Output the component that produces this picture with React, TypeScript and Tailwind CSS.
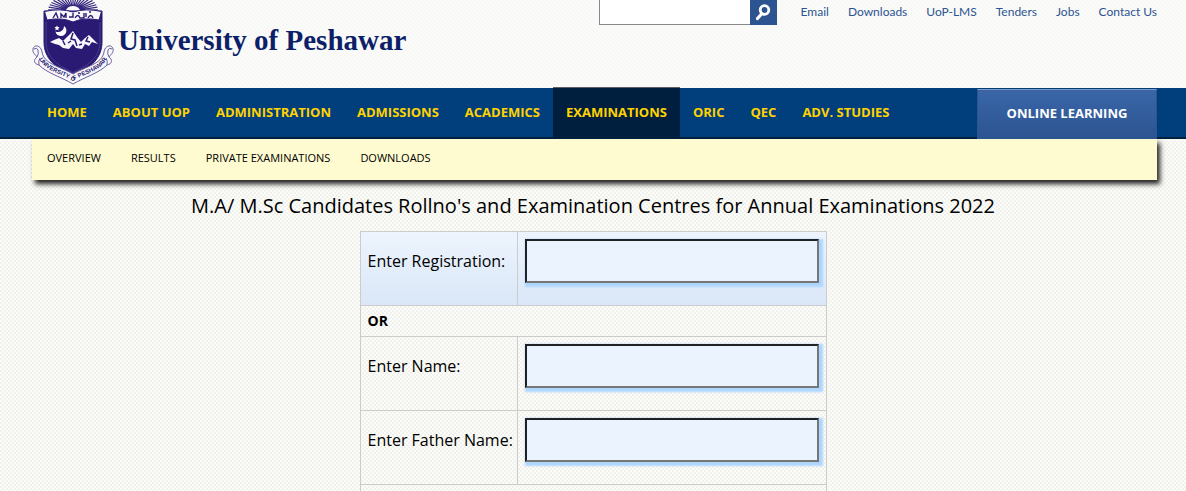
import React from 'react';

const checker =
  'bg-[conic-gradient(#f1f1ed_25%,#fcfcf8_0_50%,#f1f1ed_0_75%,#fcfcf8_0)] bg-[length:4px_4px]';
const headerChecker =
  'bg-[conic-gradient(#f8f8f6_25%,#fbfbf9_0_50%,#f8f8f6_0_75%,#fbfbf9_0)] bg-[length:4px_4px]';

const topLinks = ['Email', 'Downloads', 'UoP-LMS', 'Tenders', 'Jobs', 'Contact Us'];
const mainLinks = [
  'HOME',
  'ABOUT UOP',
  'ADMINISTRATION',
  'ADMISSIONS',
  'ACADEMICS',
  'EXAMINATIONS',
  'ORIC',
  'QEC',
  'ADV. STUDIES',
];
const subLinks = ['OVERVIEW', 'RESULTS', 'PRIVATE EXAMINATIONS', 'DOWNLOADS'];

function Crest() {
  const rays = Array.from({ length: 21 }, (_, i) => {
    const a = Math.PI + (Math.PI * (i + 0.5)) / 21;
    return `M${41 + 7 * Math.cos(a)} ${11 + 5 * Math.sin(a)}L${41 + 25 * Math.cos(a)} ${11 + 17 * Math.sin(a)}`;
  }).join('');
  return (
    <svg viewBox="0 0 82 86" className="h-[86px] w-[82px] shrink-0" role="img" aria-label="University crest">
      <path d={rays} stroke="#35287f" strokeWidth="1.2" />
      <path d="M12 11H70V42C70 58 59 68 41 76C23 68 12 58 12 42Z" fill="#2b1a74" stroke="#2b1a74" />
      <path d="M14 22V42C14 56 24 65 41 72.500C58 65 68 56 68 42V22" fill="none" stroke="#5d5299" strokeWidth=".6" />
      <path
        d="M12.500 11.500Q28 8 41 12Q54 8 69.500 11.500L67 20Q52 17 41 22Q30 17 15 20Z"
        fill="#f7f6fb"
        stroke="#2b1a74"
      />
      <path
        d="M21 18l3-5 2 5M29 18v-4l3 3 2-4v5M37 17h4v-4M43 18q3-5 5 0h4v-5M54 17v-4M56 18q3-5 5 0M46 13h2M57 12h2"
        fill="none"
        stroke="#2b1a74"
        strokeWidth="1.4"
      />
      <path d="M32 26A5.500 5.500 0 1 1 23.500 31.500A6 6 0 0 0 32 26Z" fill="#fff" />
      <path d="M25 25.500l.8 1.600 1.800.2-1.300 1.300.3 1.800-1.600-.9-1.600.9.3-1.800-1.300-1.300 1.800-.2Z" fill="#fff" />
      <path
        d="M18 42L22 40L27 38L31 41L35 37L41 31L45 37L49 42L53 38L57 35L61 39L66 44L60 42L57 46L53 44L50 49L44 48L41 44L37 49L31 48L27 45L23 44Z"
        fill="#f7f6fb"
      />
      <path d="M41 33l-2 6 4 1 2 6M31 41l2 4M56 37l-2 4 4 1M36 43l3-2M47 45l3-1" fill="none" stroke="#2b1a74" strokeWidth="1.5" />
      <path
        d="M10 52C9 45 2 44 1 49C0 53 4 55 5 57C1 60 2 64 7 65C15 73 29 77 41 84C53 77 67 73 75 65C80 64 81 60 77 57C78 55 82 53 81 49C80 44 73 45 72 52C70 64 55 66 41 74C27 66 12 64 10 52Z"
        fill="#f8f8f8"
        stroke="#675ea0"
      />
      <path d="M2 49Q5 47 6 50Q7 54 5 57M80 49Q77 47 76 50Q75 54 77 57M7 65Q6 61 8 58M75 65Q76 61 74 58" fill="none" stroke="#675ea0" />
      <path id="crest-ribbon" d="M6 57C12 71 28 73 41 81C54 73 70 71 76 57" fill="none" />
      <text fill="#2b1a74" className="font-['Liberation_Sans'] text-[6px] font-bold">
        <textPath href="#crest-ribbon" startOffset="50%" textAnchor="middle">
          UNIVERSITY OF PESHAWAR
        </textPath>
      </text>
    </svg>
  );
}

function Field({ id, label, tinted = false }: { id: string; label: string; tinted?: boolean }) {
  return (
    <tr className={tinted ? 'bg-linear-to-b from-[#edf4fd] to-[#dae7f8]' : ''}>
      <th scope="row" className="h-[74px] w-[157px] border border-[#ccc] pb-4 pl-[7px] text-left font-normal whitespace-nowrap">
        <label htmlFor={id}>{label}</label>
      </th>
      <td className="border border-[#ccc] px-[7px] pt-[7px] align-top">
        <input
          id={id}
          type="text"
          className="block h-11 w-[294px] border-2 border-t-[#202124] border-r-[#767676] border-b-[#767676] border-l-[#202124] bg-[#ebf3ff] px-2 shadow-[2px_2px_2px_2px_#add6ff] outline-none"
        />
      </td>
    </tr>
  );
}

export default function App() {
  return (
    <div className={`min-h-screen font-['Open_Sans','Noto_Sans',sans-serif] text-black ${checker}`}>
      <header className={`flex h-[88px] items-start justify-between pr-[29px] pl-8 ${headerChecker}`}>
        <a href="#" className="flex items-start gap-1">
          <Crest />
          <span className="pt-[22px] font-['Liberation_Serif',serif] text-[29px] leading-9 font-bold whitespace-nowrap text-[#0c1f68]">
            University of Peshawar
          </span>
        </a>
        <div className="flex items-start gap-6">
          <form className="flex" onSubmit={(e) => e.preventDefault()}>
            <input
              type="search"
              aria-label="Search"
              className="h-[25px] w-[151px] border border-t-0 border-r-0 border-[#888] bg-white px-2 text-xs outline-none"
            />
            <button type="submit" aria-label="Search" className="flex h-[25px] w-[27px] items-center justify-center bg-[#2c5491]">
              <svg viewBox="0 0 16 18" className="h-[18px] w-4" fill="none" stroke="#fff">
                <circle cx="9.500" cy="6" r="4.300" strokeWidth="2.800" />
                <path d="M6.500 10L2.500 14.500" strokeWidth="3.200" strokeLinecap="round" />
              </svg>
            </button>
          </form>
          <nav aria-label="Quick links" className="flex gap-[19px] pt-1 font-['Lato',sans-serif] text-xs text-[#2c5491]">
            {topLinks.map((t) => (
              <a key={t} href="#" className="whitespace-nowrap">
                {t}
              </a>
            ))}
          </nav>
        </div>
      </header>

      <div className="flex h-[51px] items-stretch justify-between border-b-2 border-[#00203f] bg-[#003e7c] pr-[29px] pl-8">
        <nav aria-label="Main" className="-mt-px -mb-0.5 flex pl-0.5 text-[13px] font-bold text-[#ffd200]">
          {mainLinks.map((t) => (
            <a
              key={t}
              href="#"
              className={`flex items-center px-[13px] pb-0.5 whitespace-nowrap ${
                t === 'EXAMINATIONS' ? 'border-t border-[#5c5f66] bg-[#001f3e]' : 'border-t border-transparent'
              }`}
            >
              {t}
            </a>
          ))}
        </nav>
        <a
          href="#"
          className="mt-px -mb-0.5 flex w-[180px] items-center justify-center border border-t-[#7f9bc6] border-r-[#2c5491] border-b-[#2c5491] border-l-[#2c5491] bg-linear-to-b from-[#3a66a8] to-[#2c5491] text-[13px] font-bold text-white"
        >
          ONLINE LEARNING
        </a>
      </div>

      <nav
        aria-label="Examinations"
        className="mr-[29px] ml-8 flex h-[41px] items-center gap-[30px] bg-[#fffbd0] px-[15px] pb-0.5 text-[11px] shadow-[3px_4px_5px_0_#222] [clip-path:inset(0_-12px_-12px_-12px)]"
      >
        {subLinks.map((t) => (
          <a key={t} href="#">
            {t}
          </a>
        ))}
      </nav>

      <main className="flex flex-col items-center">
        <h1 className="pt-3 pb-[11px] text-xl leading-7">
          M.A/ M.Sc Candidates Rollno's and Examination Centres for Annual Examinations 2022
        </h1>
        <form onSubmit={(e) => e.preventDefault()}>
          <table className="border-collapse text-base">
            <tbody>
              <Field id="registration" label="Enter Registration:" tinted />
              <tr>
                <td colSpan={2} className="h-[31px] border border-[#ccc] pl-[7px] text-sm font-bold">
                  OR
                </td>
              </tr>
              <Field id="name" label="Enter Name:" />
              <Field id="father-name" label="Enter Father Name:" />
              <tr>
                <td colSpan={2} className="h-1.5 border border-b-0 border-[#ccc] p-0" />
              </tr>
            </tbody>
          </table>
        </form>
      </main>
    </div>
  );
}
